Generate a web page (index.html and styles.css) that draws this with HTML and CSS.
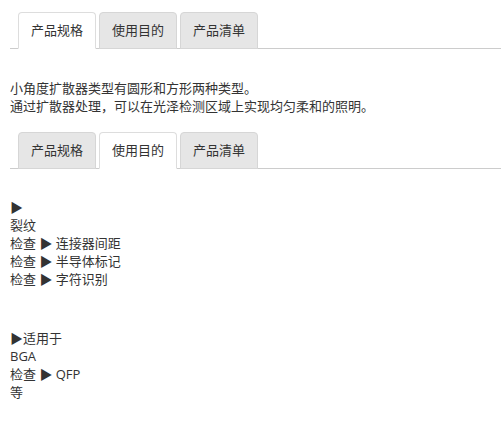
FILE: index.html
```html
<!DOCTYPE html>
<html>

<head>
    <meta charset="utf-8" />
    <title>产品规格</title>
    <link rel="stylesheet" href="styles.css">
</head>

<body>
    <!-- 第一组标签 -->
    <ul class="tabs">
        <li class="active">产品规格</li>
        <li>使用目的</li>
        <li>产品清单</li>
    </ul>
    <p class="intro">
        小角度扩散器类型有圆形和方形两种类型。<br>
        通过扩散器处理，可以在光泽检测区域上实现均匀柔和的照明。
    </p>
    <!-- 第二组标签 -->
    <ul class="tabs tabs_second">
        <li>产品规格</li>
        <li class="active">使用目的</li>
        <li>产品清单</li>
    </ul>
    <div class="usage">
        ▶<br>
        裂纹<br>
        检查 ▶ 连接器间距<br>
        检查 ▶ 半导体标记<br>
        检查 ▶ 字符识别
    </div>
    <div class="usage usage_more">
        ▶适用于<br>
        BGA<br>
        检查 ▶ QFP<br>
        等
    </div>
</body>

</html>
```

FILE: styles.css
```css
* {
    margin: 0;
    padding: 0;
    box-sizing: border-box;
}

body {
    padding: 12px 0 0 10px;
    font-family: "Open Sans", "Noto Sans CJK SC", sans-serif;
    font-size: 13px;
    line-height: 18px;
    color: #333;
    background: #fff;
}

li {
    list-style: none;
}

.tabs {
    display: flex;
    padding-left: 8px;
    border-bottom: 1px solid #ccc;
}

.tabs li {
    height: 37px;
    line-height: 35px;
    padding: 0 12px;
    margin-right: 3px;
    margin-bottom: -1px;
    border: 1px solid #d6d6d6;
    border-radius: 4px 4px 0 0;
    background: #e6e6e6;
    color: #333;
}

.tabs li.active {
    background: #fff;
    border-color: #ddd;
    border-bottom-color: #fff;
}

.intro {
    margin-top: 30px;
}

.tabs_second {
    margin-top: 17px;
}

.usage {
    margin-top: 29px;
}

.usage_more {
    margin-top: 41px;
}
```
